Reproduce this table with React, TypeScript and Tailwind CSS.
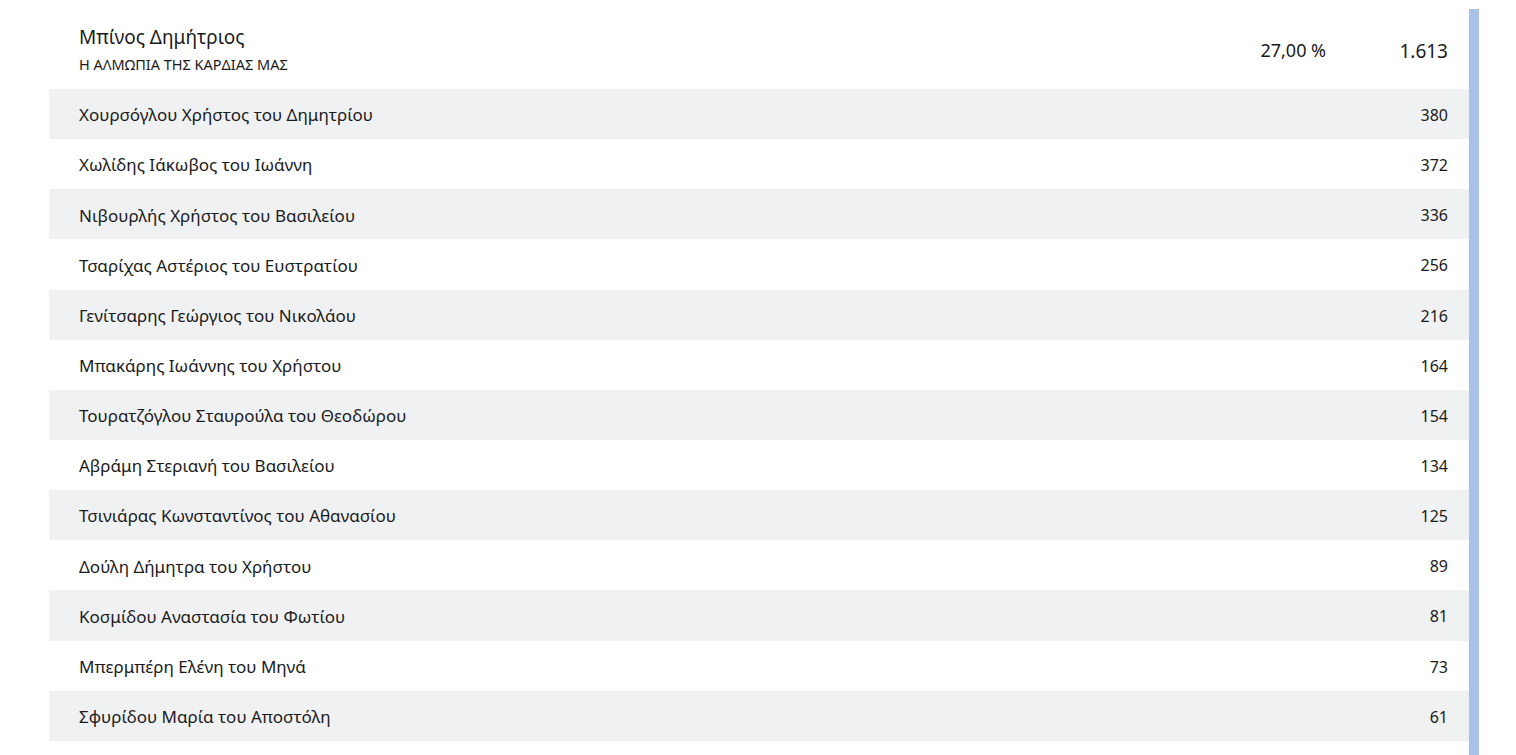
const rows: [string, string][] = [
  ["Χουρσόγλου Χρήστος του Δημητρίου", "380"],
  ["Χωλίδης Ιάκωβος του Ιωάννη", "372"],
  ["Νιβουρλής Χρήστος του Βασιλείου", "336"],
  ["Τσαρίχας Αστέριος του Ευστρατίου", "256"],
  ["Γενίτσαρης Γεώργιος του Νικολάου", "216"],
  ["Μπακάρης Ιωάννης του Χρήστου", "164"],
  ["Τουρατζόγλου Σταυρούλα του Θεοδώρου", "154"],
  ["Αβράμη Στεριανή του Βασιλείου", "134"],
  ["Τσινιάρας Κωνσταντίνος του Αθανασίου", "125"],
  ["Δούλη Δήμητρα του Χρήστου", "89"],
  ["Κοσμίδου Αναστασία του Φωτίου", "81"],
  ["Μπερμπέρη Ελένη του Μηνά", "73"],
  ["Σφυρίδου Μαρία του Αποστόλη", "61"],
];

export default function App() {
  return (
    <div className="flex h-[755px] overflow-hidden bg-white pl-[49px] pt-[9px] font-['Noto_Sans',sans-serif] text-[#1b1b1b]">
      {/* candidates list */}
      <div className="flex w-[1420px] flex-col">
        {/* party header */}
        <div className="flex h-[80px] items-center pl-[30px] pr-[21px]">
          <div className="flex flex-1 flex-col">
            <span className="-mt-[2px] text-[19px] leading-[26px]">Μπίνος Δημήτριος</span>
            <span className="mt-[5px] text-[14.5px] leading-[18px]">Η ΑΛΜΩΠΙΑ ΤΗΣ ΚΑΡΔΙΑΣ ΜΑΣ</span>
          </div>
          <span className="mt-[2px] w-[139px] text-[18px]">27,00 %</span>
          <span className="mt-[4px] text-[19px]">1.613</span>
        </div>
        {rows.map(([name, votes], i) => (
          <div
            key={name}
            data-odd={i % 2 === 0}
            className="flex h-[50.15px] items-center justify-between pl-[30px] pr-[21px] data-[odd=true]:bg-[#f0f1f3]"
          >
            <span className="mt-[2px] text-[17px]">{name}</span>
            <span className="mt-[2px] text-[16px]">{votes}</span>
          </div>
        ))}
      </div>
      {/* side bar */}
      <div className="w-[10px] bg-[#a9c1e7]"></div>
    </div>
  );
}
